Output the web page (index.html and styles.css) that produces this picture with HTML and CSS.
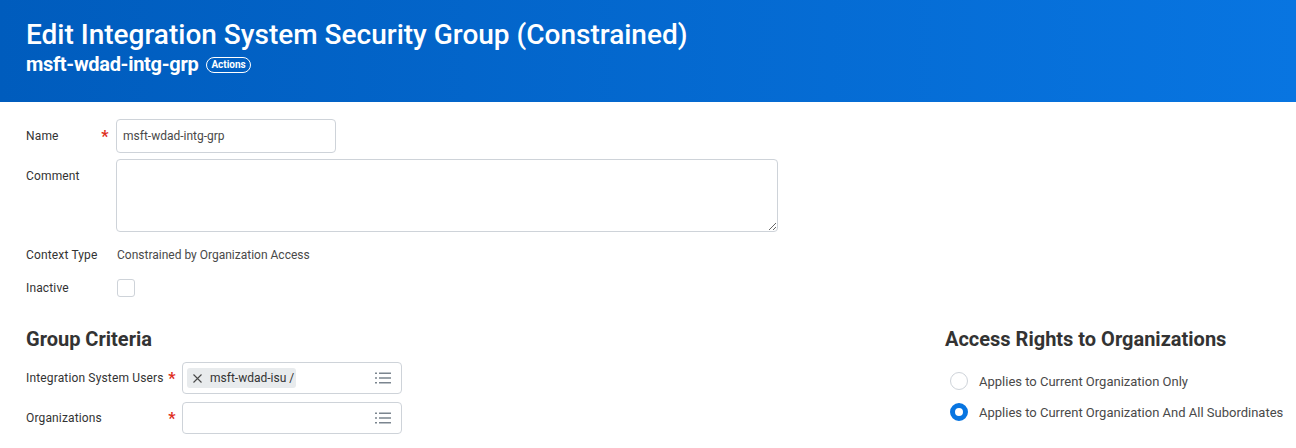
FILE: index.html
```html
<!DOCTYPE html>
<html>
<head>
<meta charset="utf-8">
<link rel="stylesheet" href="styles.css">
</head>
<body>
<header class="page-header">
  <h1 class="title">Edit Integration System Security Group (Constrained)</h1>
  <div class="subtitle-row">
    <span class="subtitle">msft-wdad-intg-grp</span>
    <span class="actions-pill">Actions</span>
  </div>
</header>
<main class="content">
  <section class="main-form">
    <div class="row row-name">
      <label class="label label-short">Name</label>
      <span class="req">*</span>
      <input class="text-input name-input" type="text" value="msft-wdad-intg-grp">
    </div>
    <div class="row row-comment">
      <label class="label label-short label-top">Comment</label>
      <span class="req"></span>
      <textarea class="textarea"></textarea>
    </div>
    <div class="row row-plain row-context">
      <label class="label label-short">Context Type</label>
      <span class="req"></span>
      <span class="value">Constrained by Organization Access</span>
    </div>
    <div class="row row-plain">
      <label class="label label-short">Inactive</label>
      <span class="req"></span>
      <span class="checkbox"></span>
    </div>
  </section>
  <div class="columns">
    <section class="criteria">
      <h2 class="section-title">Group Criteria</h2>
      <div class="row row-prompt">
        <label class="label label-long">Integration System Users</label>
        <span class="req req-long">*</span>
        <div class="prompt">
          <span class="chip">
            <svg class="chip-x" width="9" height="9" viewBox="0 0 9 9"><path d="M0.5 0.5 L8.5 8.5 M8.5 0.5 L0.5 8.5" stroke="#494949" stroke-width="1.1" fill="none"/></svg>
            <span class="chip-text">msft-wdad-isu /</span>
          </span>
          <svg class="prompt-icon" width="16" height="12" viewBox="0 0 16 12">
            <g fill="#7b858f">
              <rect x="0" y="0.5" width="2" height="1.5"/>
              <rect x="4" y="0.5" width="12" height="1.5"/>
              <rect x="0" y="5.25" width="2" height="1.5"/>
              <rect x="4" y="5.25" width="12" height="1.5"/>
              <rect x="0" y="10" width="2" height="1.5"/>
              <rect x="4" y="10" width="12" height="1.5"/>
            </g>
          </svg>
        </div>
      </div>
      <div class="row row-prompt row-prompt2">
        <label class="label label-long">Organizations</label>
        <span class="req req-long">*</span>
        <div class="prompt prompt-empty">
          <svg class="prompt-icon" width="16" height="12" viewBox="0 0 16 12">
            <g fill="#7b858f">
              <rect x="0" y="0.5" width="2" height="1.5"/>
              <rect x="4" y="0.5" width="12" height="1.5"/>
              <rect x="0" y="5.25" width="2" height="1.5"/>
              <rect x="4" y="5.25" width="12" height="1.5"/>
              <rect x="0" y="10" width="2" height="1.5"/>
              <rect x="4" y="10" width="12" height="1.5"/>
            </g>
          </svg>
        </div>
      </div>
    </section>
    <section class="access">
      <h2 class="section-title">Access Rights to Organizations</h2>
      <div class="radio-list">
        <div class="radio-row">
          <span class="radio"></span>
          <span class="radio-label">Applies to Current Organization Only</span>
        </div>
        <div class="radio-row">
          <span class="radio radio-on"></span>
          <span class="radio-label">Applies to Current Organization And All Subordinates</span>
        </div>
      </div>
    </section>
  </div>
</main>
</body>
</html>
```

FILE: styles.css
```css
* { box-sizing: border-box; }

body {
  margin: 0;
  font-family: Roboto, "Liberation Sans", Arial, sans-serif;
  color: #333333;
  background: #ffffff;
}

.page-header {
  height: 102px;
  background: linear-gradient(to right, #005cbd, #0875e1);
  padding: 19px 0 0 26px;
  color: #ffffff;
}

.title {
  margin: 0;
  font-size: 28px;
  line-height: 32px;
  font-weight: 500;
  letter-spacing: 0;
}

.subtitle-row {
  display: flex;
  align-items: center;
  height: 26px;
}

.subtitle {
  font-size: 20px;
  font-weight: 700;
  line-height: 26px;
  letter-spacing: -0.3px;
}

.actions-pill {
  margin-left: 8px;
  border: 1px solid #ffffff;
  border-radius: 9px;
  font-size: 10px;
  font-weight: 700;
  line-height: 14px;
  padding: 0 4px;
  height: 16px;
  margin-top: 1px;
}

.content {
  padding: 0 0 0 26px;
}

.row {
  display: flex;
  align-items: center;
}

.label {
  font-size: 12px;
  font-weight: 400;
  letter-spacing: 0.15px;
  color: #333333;
  flex: none;
}

.label-short { width: 74px; }
.label-long { width: 141px; }

.label-top {
  align-self: flex-start;
  margin-top: 10px;
}

.req {
  width: 10px;
  flex: none;
  color: #de2e21;
  font-size: 16px;
  font-weight: 700;
  text-align: center;
  line-height: 16px;
  margin-right: 6px;
  margin-top: 2px;
}

.row-comment .req { align-self: flex-start; }

.req-long { margin-right: 5px; }

.row-name { margin-top: 17px; height: 34px; }

.text-input {
  width: 220px;
  height: 34px;
  border: 1px solid #ced3d9;
  border-radius: 4px;
  padding: 0 6px;
  font-family: Roboto, "Liberation Sans", Arial, sans-serif;
  font-size: 12px;
  color: #494949;
  outline: none;
}

.row-comment { margin-top: 6px; }

.textarea {
  width: 662px;
  height: 73px;
  border: 1px solid #ced3d9;
  border-radius: 4px;
  resize: both;
  font-family: Roboto, "Liberation Sans", Arial, sans-serif;
  outline: none;
  display: block;
}

.row-plain { height: 33px; }
.row-context { margin-top: 6px; }

.value {
  font-size: 12px;
  color: #494949;
  margin-left: 1px;
}

.checkbox {
  width: 18px;
  height: 18px;
  border: 1px solid #ced3d9;
  border-radius: 3px;
  margin-left: 1px;
}

.columns {
  display: grid;
  grid-template-columns: 919px 1fr;
  margin-top: 23px;
}

.section-title {
  margin: 0;
  font-size: 20px;
  line-height: 24px;
  font-weight: 700;
  color: #333333;
}

.row-prompt { margin-top: 11px; height: 32px; }
.row-prompt2 { margin-top: 8px; }

.prompt {
  width: 220px;
  height: 32px;
  border: 1px solid #ced3d9;
  border-radius: 4px;
  display: flex;
  align-items: center;
  padding: 0 10px 0 4px;
}

.prompt-empty { justify-content: flex-end; }

.chip {
  display: flex;
  align-items: center;
  height: 20px;
  background: #e8ebed;
  border-radius: 3px;
  padding: 0 2px 0 6px;
  font-size: 12px;
  color: #333333;
}

.chip-x {
  margin-right: 8px;
  flex: none;
}

.prompt-icon {
  margin-left: auto;
  flex: none;
}

.radio-list {
  margin-top: 21px;
  padding-left: 5px;
  display: flex;
  flex-direction: column;
  gap: 13px;
}

.radio-row {
  display: flex;
  align-items: center;
  height: 18px;
}

.radio {
  width: 18px;
  height: 18px;
  border-radius: 50%;
  border: 1px solid #ced3d9;
  flex: none;
  margin-right: 11px;
}

.radio-on {
  border: 5px solid #0875e1;
  background: #ffffff;
}

.radio-label {
  font-size: 13px;
  color: #494949;
}
```
